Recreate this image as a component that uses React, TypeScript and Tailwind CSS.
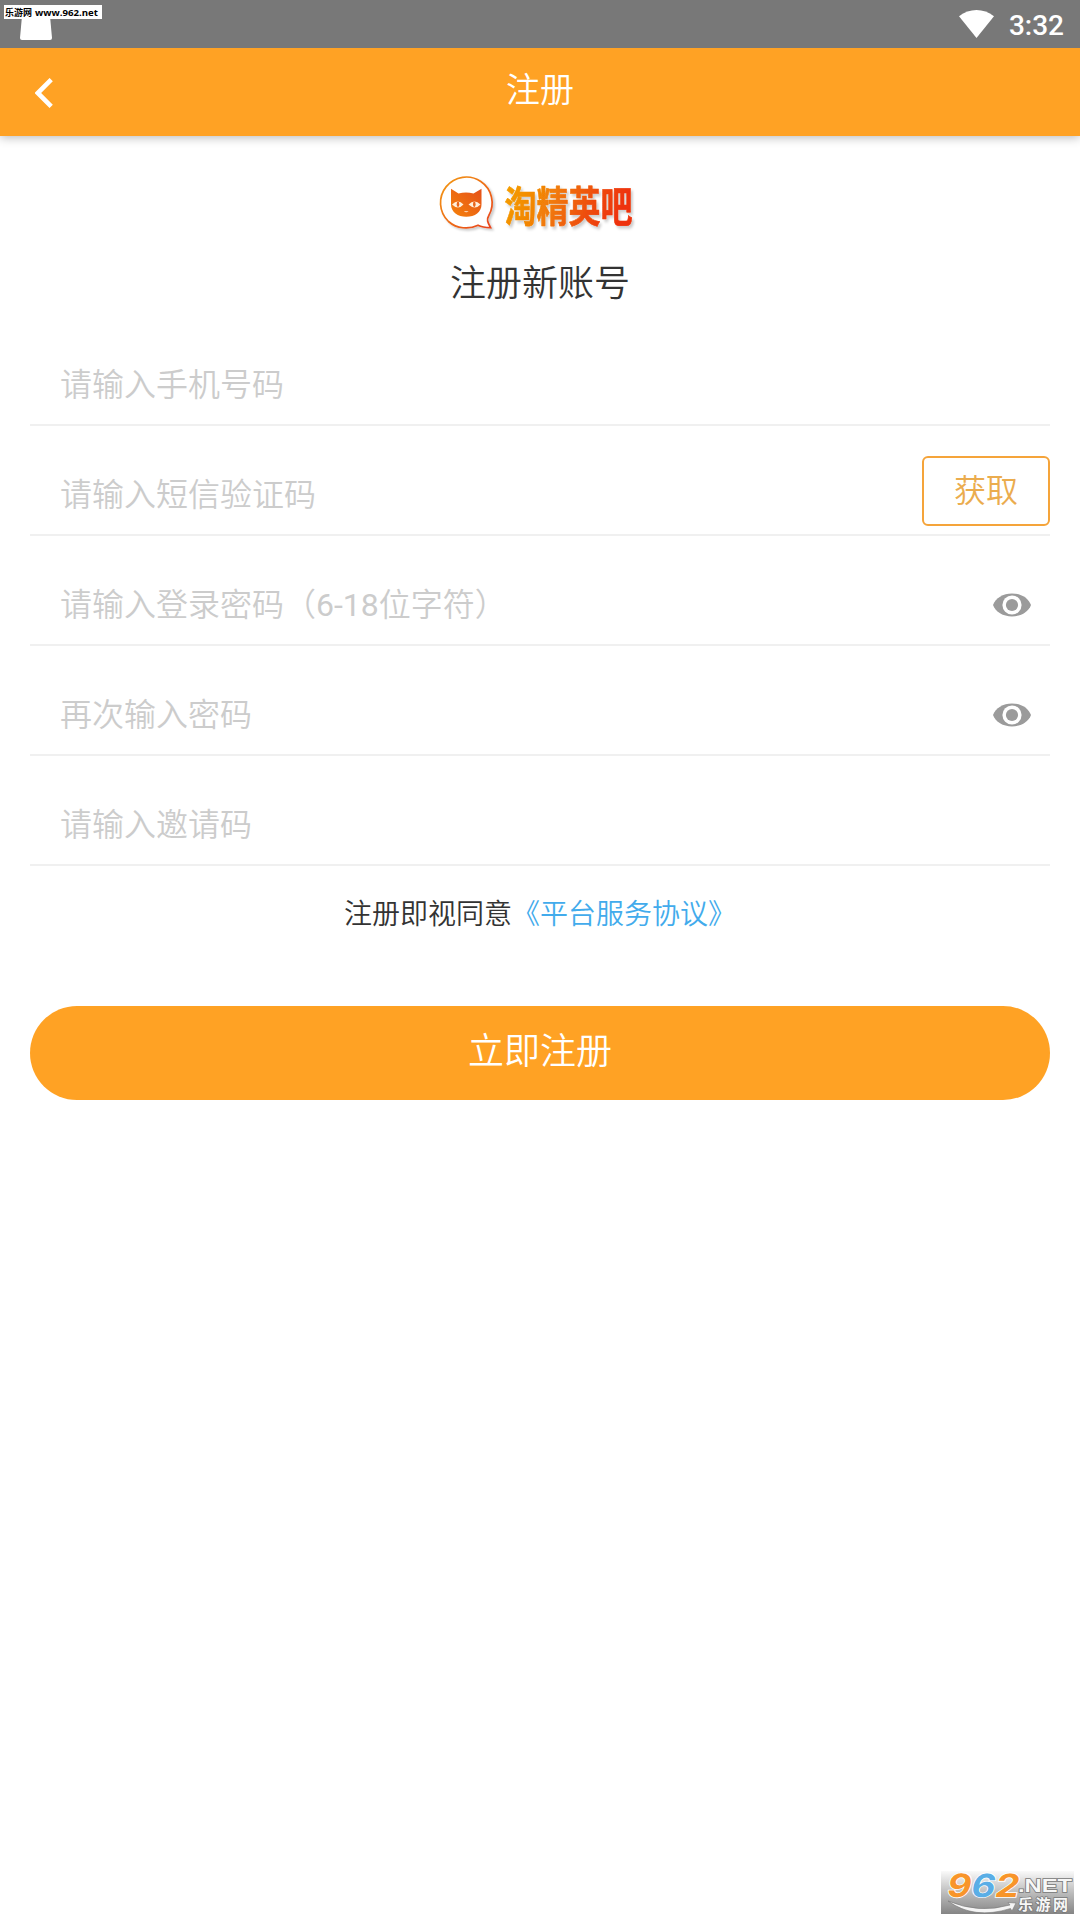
import { useState } from "react";

const fields = [
    { id: "phone", placeholder: "请输入手机号码" },
    { id: "code", placeholder: "请输入短信验证码", action: true },
    { id: "password", placeholder: "请输入登录密码（6-18位字符）", secret: true },
    { id: "confirm", placeholder: "再次输入密码", secret: true },
    { id: "invite", placeholder: "请输入邀请码" },
];

function EyeIcon() {
    return (
        <svg className="w-[38px] h-6" viewBox="0 0 38 24">
            <path
                d="M0 12 C2.6 5 10 0.4 19 0.4 C28 0.4 35.4 5 38 12 C35.4 19 28 23.4 19 23.4 C10 23.4 2.6 19 0 12 Z"
                fill="#9b9b9b"
            />
            <circle cx="19" cy="12" r="9.6" fill="#fff" />
            <circle cx="19" cy="12" r="6.1" fill="#9b9b9b" />
        </svg>
    );
}

function StatusBar() {
    return (
        <div className="relative flex items-center justify-end h-12 pr-4 bg-[#787878]">
            {/* Notification icon, half covered by the site tag */}
            <svg className="absolute left-5 top-4 w-8 h-6" viewBox="0 0 32 24">
                <path d="M2 0 H30 L32 22 Q32 24 30 24 H2 Q0 24 0 22 Z" fill="#fff" />
            </svg>
            <div className="absolute left-1 top-[5px] w-[98px] h-[14px] bg-white">
                <svg className="w-[98px] h-[14px] overflow-visible" viewBox="0 0 98 14">
                    <text x="1" y="10.8" fontSize="9" fontWeight="700" fontFamily="Noto Sans CJK SC, sans-serif" textLength="27">
                        乐游网
                    </text>
                    <text x="31" y="10.8" fontSize="9.5" fontWeight="700" fontFamily="Open Sans, sans-serif" textLength="63" lengthAdjust="spacingAndGlyphs">
                        www.962.net
                    </text>
                </svg>
            </div>
            <svg className="w-[35px] h-7 mr-[15px]" viewBox="0 0 35 28">
                <path d="M0 6.3 C10.5 -2.1 24.5 -2.1 35 6.3 L17.5 28 Z" fill="#fff" />
            </svg>
            <span className="text-white text-[28px] leading-12 font-medium pt-[3px]">3:32</span>
        </div>
    );
}

function Logo() {
    return (
        <svg className="w-[204px] h-16" viewBox="0 0 204 64">
            <defs>
                <linearGradient id="cat" x1="0" y1="0" x2="1" y2="1">
                    <stop offset="0" stopColor="#f39b12" />
                    <stop offset="1" stopColor="#e8421c" />
                </linearGradient>
                <linearGradient id="face" x1="0" y1="1" x2="1" y2="0">
                    <stop offset="0" stopColor="#f5820a" />
                    <stop offset="1" stopColor="#e5501a" />
                </linearGradient>
                <linearGradient id="word" x1="0" y1="0" x2="1" y2="0.2">
                    <stop offset="0" stopColor="#f5a300" />
                    <stop offset="0.45" stopColor="#f17a08" />
                    <stop offset="0.75" stopColor="#ee4b09" />
                    <stop offset="1" stopColor="#ee3208" />
                </linearGradient>
                <filter id="soft" x="-10%" y="-10%" width="125%" height="130%">
                    <feDropShadow dx="2" dy="2" stdDeviation="1.3" floodColor="#000" floodOpacity="0.2" />
                </filter>
            </defs>
            <path
                d="M40 53.2 C31 57.5 19 57 10.5 49.5 A25.8 25.8 0 1 1 50.8 43.5 C48.4 47.5 49.4 50.2 52.6 55.6 C48 55.6 44 55.2 40 53.2 Z"
                fill="#fff"
                stroke="url(#cat)"
                strokeWidth="1.7"
                filter="url(#soft)"
            />
            <path
                d="M13 16.8 L20.5 21.6 Q28 19.6 35.5 21.6 L43.5 16.8 V32.5 C43.5 40 37 44.8 28.2 44.8 C20 44.8 13 40 13 32.5 Z"
                fill="url(#face)"
            />
            <path d="M14 32.5 Q20 26.5 25.5 32.5 Q20 38.5 14 32.5 Z" fill="#ffefd9" />
            <path d="M30.5 32.5 Q36.5 26.5 42.5 32.5 Q37 38.5 30.5 32.5 Z" fill="#ffefd9" />
            <ellipse cx="20" cy="32.3" rx="1.3" ry="2.9" fill="#e9651a" />
            <ellipse cx="36.3" cy="32.3" rx="1.3" ry="2.9" fill="#e9651a" />
            <path d="M25.8 39.2 Q28.2 41.2 30.6 39.2 Z" fill="#ffefd9" />
            <text
                x="66.5"
                y="38.3"
                transform="scale(1 1.31)"
                fontSize="32"
                fontWeight="700"
                fontFamily="Noto Sans CJK SC, sans-serif"
                fill="url(#word)"
                stroke="url(#word)"
                strokeWidth="0.5"
                strokeLinejoin="round"
                filter="url(#soft)"
            >
                淘精英吧
            </text>
        </svg>
    );
}

function SiteBadge() {
    return (
        <div className="w-[133px] h-[43px] bg-linear-to-b from-[#fafafa] via-[#bdbdbd] to-[#858585]">
            <svg className="w-[133px] h-[43px] overflow-visible" viewBox="0 0 133 43">
                <g fontFamily="Inter, sans-serif" fontWeight="700" fontSize="32" stroke="#fff" strokeWidth="1.6" paintOrder="stroke" transform="skewX(-12)">
                    <text x="10" y="26" textLength="24" lengthAdjust="spacingAndGlyphs" fill="#f8952a">9</text>
                    <text x="34" y="26" textLength="24" lengthAdjust="spacingAndGlyphs" fill="#5aaee6">6</text>
                    <text x="58" y="26" textLength="24" lengthAdjust="spacingAndGlyphs" fill="#f8952a">2</text>
                </g>
                <path d="M7 30 Q38 43 69 34 L67 31.5 L75 32 L71 40 L69.5 37.5 Q33 49 7 30 Z" fill="#f4f4f4" stroke="#777" strokeWidth="0.6" />
                <g fill="#f7f7f7" stroke="#777" strokeWidth="1.4" paintOrder="stroke" fontWeight="700">
                    <text x="77" y="21" fontSize="18.5" fontFamily="Liberation Sans, sans-serif" textLength="54" lengthAdjust="spacingAndGlyphs">
                        .NET
                    </text>
                    <text x="77" y="38.5" fontSize="15" fontFamily="Noto Sans CJK SC, sans-serif" textLength="50">
                        乐游网
                    </text>
                </g>
            </svg>
        </div>
    );
}

export default function App() {
    const [values, setValues] = useState<Record<string, string>>({});

    return (
        <div
            lang="zh-CN"
            className="flex flex-col w-[1080px] h-[1920px] bg-white overflow-hidden font-[350] font-['Roboto','Noto_Sans_CJK_SC',sans-serif]"
        >
            <StatusBar />

            {/* Title bar */}
            <header className="grid grid-cols-[120px_1fr_120px] items-center h-22 shrink-0 bg-[#ffa224] text-white shadow-[0_1px_10px_rgba(0,0,0,0.3)]">
                <svg className="ml-[35px] mt-px w-[18px] h-[30px]" viewBox="0 0 18 30">
                    <path d="M16.2 1.6 L2.8 15 L16.2 28.4" fill="none" stroke="#fff" strokeWidth="4.6" />
                </svg>
                <h1 className="text-center text-[34px] leading-[50px] pb-1">注册</h1>
            </header>

            <main className="flex flex-col px-[30px] pt-9">
                <div className="flex justify-center">
                    <Logo />
                </div>
                <h2 className="mt-[22px] text-center text-4xl leading-[52px] text-[#333]">
                    注册新账号
                </h2>

                <form className="mt-1.5">
                    {fields.map((f) => (
                        <div key={f.id} className="flex items-center h-[110px] border-b-2 border-[#f0f0f0]">
                            {/* Regular weight keeps the digits from going thin, the hanzi stay DemiLight */}
                            <input
                                type={f.secret ? "password" : "text"}
                                placeholder={f.placeholder}
                                value={values[f.id] ?? ""}
                                onChange={(e) => setValues({ ...values, [f.id]: e.target.value })}
                                className="flex-1 min-w-0 h-12 mt-[30px] pl-[30px] text-[32px] font-normal font-['Roboto','Noto_Sans_CJK_SC_DemiLight','Noto_Sans_CJK_SC',sans-serif] outline-none placeholder:text-[#ccc]"
                            />
                            {f.action && (
                                <button
                                    type="button"
                                    className="w-32 h-[70px] mt-[22px] rounded-md border-2 border-[#f5a43a] text-[32px] text-[#ebac4e]"
                                >
                                    获取
                                </button>
                            )}
                            {f.secret && (
                                <button type="button" className="mt-[30px] mr-[19px]">
                                    <EyeIcon />
                                </button>
                            )}
                        </div>
                    ))}

                    <p className="mt-[29px] text-center text-[28px] leading-10 text-[#333]">
                        注册即视同意<a className="text-[#42abec]">《平台服务协议》</a>
                    </p>

                    <button
                        type="button"
                        className="mt-[71px] w-full h-[94px] pb-[3px] rounded-full bg-[#ffa224] text-4xl text-white"
                    >
                        立即注册
                    </button>
                </form>
            </main>

            <footer className="flex justify-end mt-auto pr-[6px] pb-[6px]">
                <SiteBadge />
            </footer>
        </div>
    );
}
